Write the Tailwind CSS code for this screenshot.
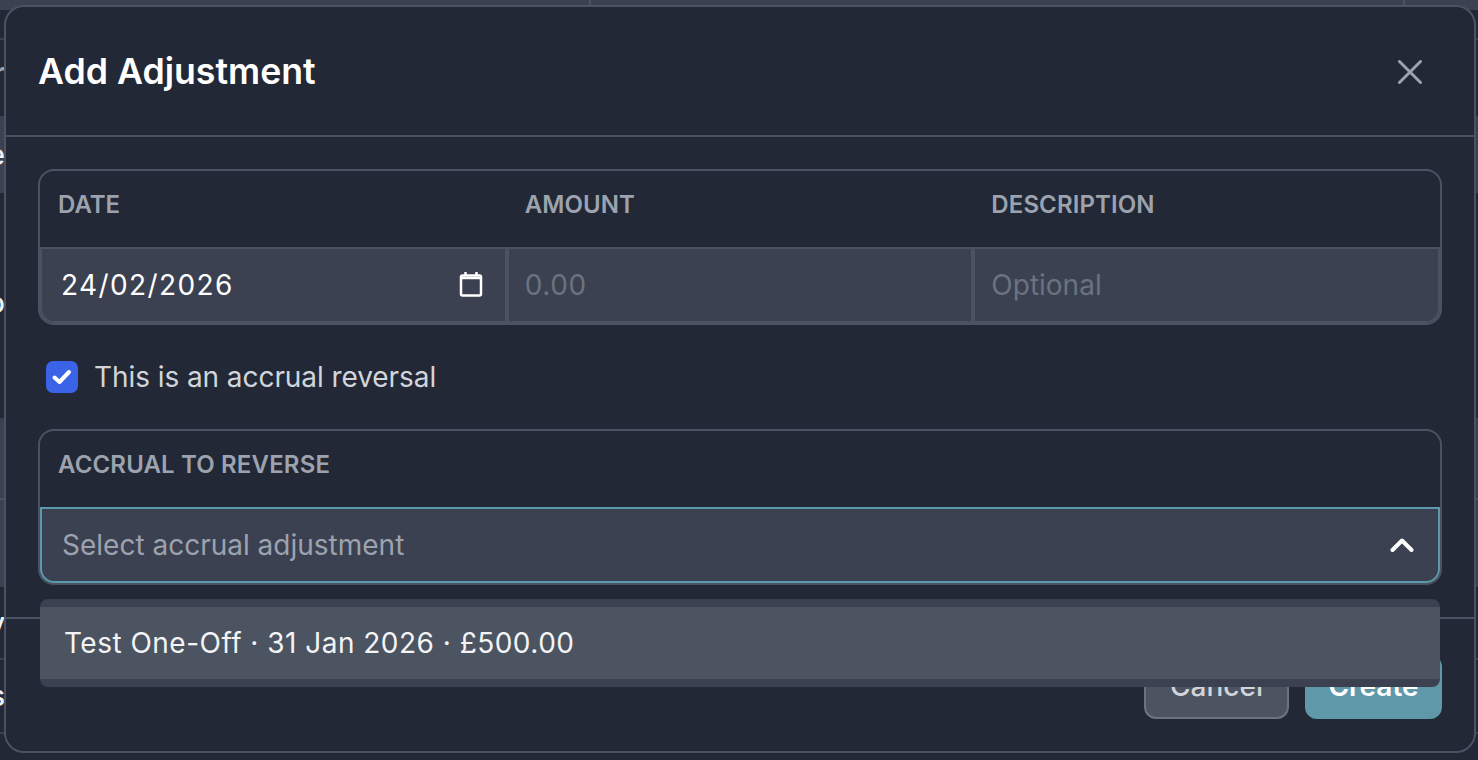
<!DOCTYPE html>
<html lang="en">
<head>
    <meta charset="UTF-8">
    <meta name="viewport" content="width=device-width, initial-scale=1.0">
    <title>Add Adjustment</title>
    <script src="https://cdn.jsdelivr.net/npm/@tailwindcss/browser@4"></script>
</head>
<body class="bg-[#222836] font-['Inter',sans-serif] overflow-hidden">
    <div class="relative w-[1478px] h-[760px] overflow-hidden">

        <!-- page behind the modal, only the edges show -->
        <div class="flex flex-col text-[28px] font-medium leading-none text-[#f3f4f6]">
            <div class="h-[10px] bg-[#3b4150] flex">
                <div class="w-[591px] border-r-2 border-[#4b5262]"></div>
                <div class="w-[814px] border-r-2 border-[#4b5262]"></div>
            </div>
            <div class="h-[30px] border-b-2 border-[#3b4150]"></div>
            <div class="h-[76px] pb-[10px] flex items-center">
                <div class="w-[5px] flex justify-end overflow-hidden text-[#9ca3af] font-bold"><span>r</span></div>
            </div>
            <div class="h-[77px] bg-[#3b4150] flex items-center">
                <div class="w-[5px] flex justify-end overflow-hidden"><span>e</span></div>
            </div>
            <div class="h-[225px] pb-[6px] flex items-center">
                <div class="w-[5px] flex justify-end overflow-hidden"><span>o</span></div>
            </div>
            <div class="h-[82px] bg-[#3b4150] border-b-2 border-[#4b5262]"></div>
            <div class="h-[87px] bg-[#3b4150]"></div>
            <div class="h-[73px] border-b-2 border-[#3b4150] flex items-center">
                <div class="w-[5px] flex justify-end overflow-hidden"><span>y</span></div>
            </div>
            <div class="h-[74px] border-b-2 border-[#3b4150] flex items-center">
                <div class="w-[5px] flex justify-end overflow-hidden"><span>s</span></div>
            </div>
        </div>

        <!-- modal -->
        <div class="absolute left-[4px] top-[5px] w-[1472px] h-[748px] bg-[#222836] border-2 border-[#4b5262] rounded-[20px]">
            <div class="h-[130px] pt-[2px] border-b-2 border-[#4b5262] flex items-center justify-between pl-[32px] pr-[52px]">
                <h2 class="text-[35.7px] font-semibold text-white">Add Adjustment</h2>
                <svg class="w-[24px] h-[24px]" viewBox="0 0 24 24" fill="none" stroke="#9ca3af" stroke-width="3" stroke-linecap="round">
                    <path d="M1.5 1.5 22.5 22.5M22.5 1.5 1.5 22.5"/>
                </svg>
            </div>

            <div class="relative px-[32px] pt-[32px]">
                <div class="h-[156px] border-2 border-[#4b5262] rounded-[16px] flex flex-col">
                    <div class="h-[76px] pb-[8px] grid grid-cols-3 items-center text-[24px] font-semibold text-[#9ca3af]">
                        <div class="pl-[18px]">DATE</div>
                        <div class="pl-[18px] tracking-[0.1px]">AMOUNT</div>
                        <div class="pl-[18px] tracking-[0.1px]">DESCRIPTION</div>
                    </div>
                    <div class="h-[76px] grid grid-cols-3 text-[28px]">
                        <div class="bg-[#3b4150] border-2 border-[#4b5262] rounded-bl-[14px] flex items-center justify-between pl-[19px] pr-[22px] text-white tracking-[1.4px]">
                            <span>24/02/2026</span>
                            <svg class="w-[24px] h-[26px] mb-[2px]" viewBox="0 0 24 26" fill="none" stroke="white" stroke-width="2.5">
                                <rect x="2" y="4.5" width="20" height="20" rx="1.5"/>
                                <path d="M2 7h20M6.5 1v3M17.5 1v3"/>
                            </svg>
                        </div>
                        <div class="bg-[#3b4150] border-2 border-[#4b5262] flex items-center pl-[16px] text-[#6b7280]">
                            <input class="w-full outline-none bg-transparent placeholder:text-[#6b7280] tracking-[0.6px]" placeholder="0.00">
                        </div>
                        <div class="bg-[#3b4150] border-2 border-[#4b5262] rounded-br-[14px] flex items-center pl-[16px] text-[#6b7280]">
                            <input class="w-full outline-none bg-transparent placeholder:text-[#6b7280]" placeholder="Optional">
                        </div>
                    </div>
                </div>

                <div class="mt-[36px] h-[32px] pl-[8px] flex items-center gap-[16px]">
                    <div class="w-[32px] h-[32px] rounded-[7px] bg-[#3b63e8] flex items-center justify-center">
                        <svg class="w-[22px] h-[22px]" viewBox="0 0 22 22" fill="none" stroke="white" stroke-width="4" stroke-linecap="round" stroke-linejoin="round">
                            <path d="M3.5 11.5 8.5 16 18 6"/>
                        </svg>
                    </div>
                    <span class="text-[28px] text-[#d1d5db] tracking-[-0.07px]">This is an accrual reversal</span>
                </div>

                <div class="mt-[36px] h-[156px] border-2 border-[#4b5262] rounded-[16px] flex flex-col">
                    <div class="h-[76px] pb-[8px] flex items-center pl-[18px] text-[24px] font-semibold text-[#9ca3af] tracking-[0.15px]">ACCRUAL TO REVERSE</div>
                    <div class="h-[76px] bg-[#3b4150] border-2 border-[#5b9aaa] rounded-b-[14px] flex items-center justify-between pl-[20px] pr-[24px] text-[28px] text-[#9ca3af]">
                        <span>Select accrual adjustment</span>
                        <svg class="w-[24px] h-[16px]" viewBox="0 0 24 16" fill="none" stroke="white" stroke-width="4" stroke-linecap="round" stroke-linejoin="round">
                            <path d="M2.5 13 12 3.5 21.5 13"/>
                        </svg>
                    </div>
                </div>

                <!-- open select list -->
                <div class="absolute left-[34px] top-[462px] w-[1400px] z-10 bg-[#3b4150] rounded-[8px] py-[8px]">
                    <div class="h-[72px] bg-[#4c5361] flex items-center pl-[24px] text-[28px] text-[#f3f4f6] tracking-[0.48px]">Test One-Off · 31 Jan 2026 · £500.00</div>
                </div>
            </div>

            <div class="mt-[32px] border-t-2 border-[#4b5262] pt-[36px] px-[32px] flex justify-end gap-[16px]">
                <button class="w-[145px] h-[64px] pb-[2px] bg-[#4c5361] border-2 border-[#6b7280] rounded-[12px] text-[28px] font-medium text-[#d1d5db]">Cancel</button>
                <button class="w-[137px] h-[64px] pb-[2px] bg-[#5e98a9] rounded-[12px] text-[28px] font-semibold text-white">Create</button>
            </div>
        </div>
    </div>
</body>
</html>
